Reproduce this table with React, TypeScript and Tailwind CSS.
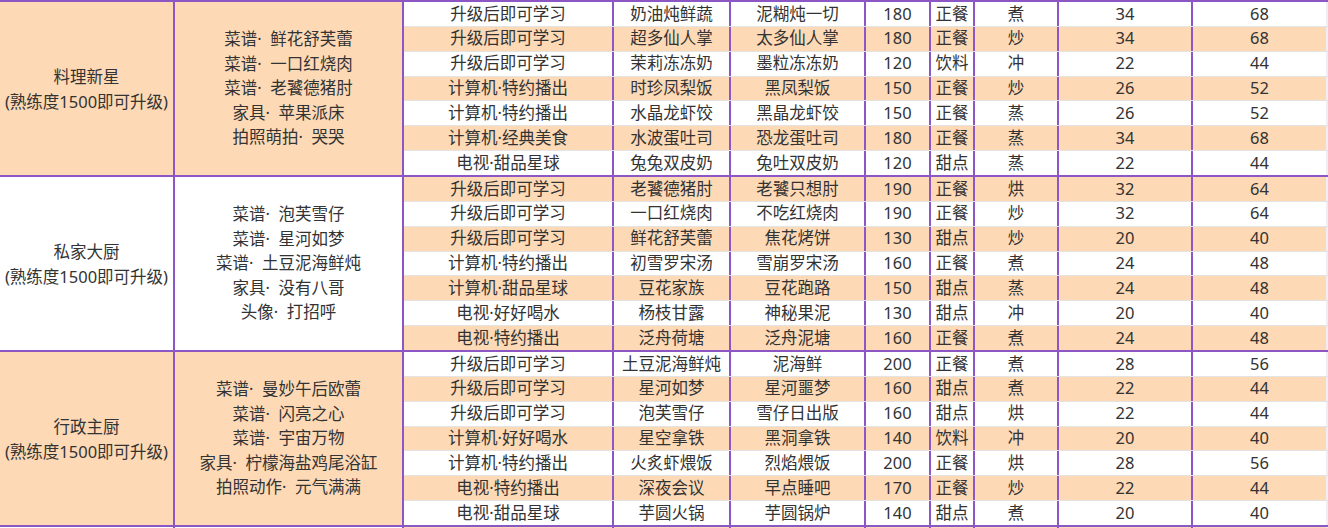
type Row = [string, string, string, string, string, string, string, string];

interface Group {
  title: string;
  rewards: string[];
  rows: Row[];
}

const groups: Group[] = [
  {
    title: "料理新星",
    rewards: ["菜谱·  鲜花舒芙蕾", "菜谱·  一口红烧肉", "菜谱·  老饕德猪肘", "家具·  苹果派床", "拍照萌拍·  哭哭"],
    rows: [
      ["升级后即可学习", "奶油炖鲜蔬", "泥糊炖一切", "180", "正餐", "煮", "34", "68"],
      ["升级后即可学习", "超多仙人掌", "太多仙人掌", "180", "正餐", "炒", "34", "68"],
      ["升级后即可学习", "茉莉冻冻奶", "墨粒冻冻奶", "120", "饮料", "冲", "22", "44"],
      ["计算机·特约播出", "时珍凤梨饭", "黑凤梨饭", "150", "正餐", "炒", "26", "52"],
      ["计算机·特约播出", "水晶龙虾饺", "黑晶龙虾饺", "150", "正餐", "蒸", "26", "52"],
      ["计算机·经典美食", "水波蛋吐司", "恐龙蛋吐司", "180", "正餐", "蒸", "34", "68"],
      ["电视·甜品星球", "兔兔双皮奶", "兔吐双皮奶", "120", "甜点", "蒸", "22", "44"],
    ],
  },
  {
    title: "私家大厨",
    rewards: ["菜谱·  泡芙雪仔", "菜谱·  星河如梦", "菜谱·  土豆泥海鲜炖", "家具·  没有八哥", "头像·  打招呼"],
    rows: [
      ["升级后即可学习", "老饕德猪肘", "老饕只想肘", "190", "正餐", "烘", "32", "64"],
      ["升级后即可学习", "一口红烧肉", "不吃红烧肉", "190", "正餐", "炒", "32", "64"],
      ["升级后即可学习", "鲜花舒芙蕾", "焦花烤饼", "130", "甜点", "炒", "20", "40"],
      ["计算机·特约播出", "初雪罗宋汤", "雪崩罗宋汤", "160", "正餐", "煮", "24", "48"],
      ["计算机·甜品星球", "豆花家族", "豆花跑路", "150", "甜点", "蒸", "24", "48"],
      ["电视·好好喝水", "杨枝甘露", "神秘果泥", "130", "甜点", "冲", "20", "40"],
      ["电视·特约播出", "泛舟荷塘", "泛舟泥塘", "160", "正餐", "煮", "24", "48"],
    ],
  },
  {
    title: "行政主厨",
    rewards: ["菜谱·  曼妙午后欧蕾", "菜谱·  闪亮之心", "菜谱·  宇宙万物", "家具·  柠檬海盐鸡尾浴缸", "拍照动作·  元气满满"],
    rows: [
      ["升级后即可学习", "土豆泥海鲜炖", "泥海鲜", "200", "正餐", "煮", "28", "56"],
      ["升级后即可学习", "星河如梦", "星河噩梦", "160", "甜点", "煮", "22", "44"],
      ["升级后即可学习", "泡芙雪仔", "雪仔日出版", "160", "甜点", "烘", "22", "44"],
      ["计算机·好好喝水", "星空拿铁", "黑洞拿铁", "140", "饮料", "冲", "20", "40"],
      ["计算机·特约播出", "火炙虾煨饭", "烈焰煨饭", "200", "正餐", "烘", "28", "56"],
      ["电视·特约播出", "深夜会议", "早点睡吧", "170", "正餐", "炒", "22", "44"],
      ["电视·甜品星球", "芋圆火锅", "芋圆锅炉", "140", "甜点", "煮", "20", "40"],
    ],
  },
  {
    title: "",
    rewards: [],
    rows: [["", "", "", "", "", "", "", ""]],
  },
];

// widths include the 2px right border
const colWidths = ["w-[210px]", "w-[117px]", "w-[135px]", "w-[65px]", "w-[44px]", "w-[84px]", "w-[134px]", "flex-1"];

function DataRow({ row, shaded, last }: { row: Row; shaded: boolean; last: boolean }) {
  return (
    <div
      className={`flex flex-1 min-h-0 ${shaded ? "bg-[#fdd9b6]" : "bg-white"} ${
        last ? "" : "border-b border-[#e4e4e4]"
      }`}
    >
      {row.map((cell, i) => (
        <div
          key={i}
          className={`${colWidths[i]} shrink-0 flex items-center justify-center whitespace-nowrap ${
            i < 7 ? "border-r-2 border-[#8c56c4]" : "border-r-2 border-[#f1edf5]"
          }`}
        >
          {cell}
        </div>
      ))}
    </div>
  );
}

export default function App() {
  let rowIndex = 0;
  return (
    <div className="w-[1328px] h-[528px] overflow-hidden bg-white text-[16.5px] text-[#333] font-['Noto_Sans','Noto_Sans_CJK_SC',sans-serif]">
      {groups.map((g, gi) => {
        const groupShaded = gi % 2 === 0;
        return (
          <div key={gi} className="flex h-[175px] border-t-2 border-[#8c56c4]">
            <div
              className={`w-[175px] shrink-0 flex flex-col items-center justify-center text-center leading-[25px] border-r-2 border-[#8c56c4] ${
                groupShaded ? "bg-[#fdd9b6]" : "bg-white"
              }`}
            >
              {g.title && (
                <>
                  <span>{g.title}</span>
                  <span className="whitespace-nowrap">(熟练度1500即可升级)</span>
                </>
              )}
            </div>
            <div
              className={`w-[229px] shrink-0 flex flex-col items-center justify-center text-center leading-[24.5px] border-r-2 border-[#8c56c4] ${
                groupShaded ? "bg-[#fdd9b6]" : "bg-white"
              }`}
            >
              {g.rewards.map((r) => (
                <span key={r} className="whitespace-pre">
                  {r}
                </span>
              ))}
            </div>
            <div className="flex-1 flex flex-col">
              {g.rows.map((row, ri) => {
                const shaded = rowIndex % 2 === 1;
                rowIndex++;
                return (
                  <DataRow
                    key={ri}
                    row={row}
                    shaded={shaded}
                    last={ri === g.rows.length - 1 && g.rows.length > 1}
                  />
                );
              })}
              {g.rows.length === 1 && <div className="flex-[6]" />}
            </div>
          </div>
        );
      })}
    </div>
  );
}
